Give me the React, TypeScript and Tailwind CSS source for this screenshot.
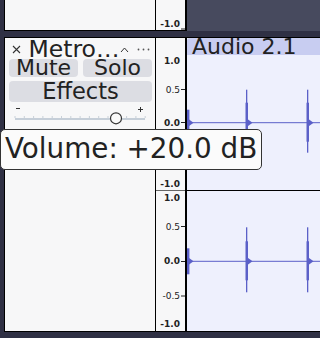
import React from 'react';

const ink = '#222';
const wave = '#5b60c8';

function RulerScale({ height, labels, ticks }: { height: number; labels: { y: number; t: string; bold?: boolean }[]; ticks: number[] }) {
  return (
    <svg width={29} height={height} className="block">
      {labels.map((l) => (
        <text
          key={l.t + l.y}
          x={24}
          y={l.y}
          textAnchor="end"
          fontFamily="DejaVu Sans, sans-serif"
          fontSize={9}
          fontWeight={l.bold ? 700 : 400}
          fill={ink}
        >
          {l.t}
        </text>
      ))}
      {ticks.map((y) => (
        <line key={y} x1={25} x2={29} y1={y} y2={y} stroke={ink} strokeWidth={1} />
      ))}
    </svg>
  );
}

function Spike({ x, cy, up, down }: { x: number; cy: number; up: number; down: number }) {
  return (
    <g fill={wave}>
      <rect x={x} y={cy - up} width={1.3} height={up + down} />
      <rect x={x - 0.5} y={cy - 20} width={2.5} height={39} />
      <polygon points={`${x + 1},${cy - 4} ${x + 6.5},${cy} ${x + 1},${cy + 4}`} />
    </g>
  );
}

function Channel({ height, cy, up, down }: { height: number; cy: number; up: number; down: number }) {
  return (
    <svg width={133} height={height} className="block">
      <line x1={0} x2={133} y1={cy} y2={cy} stroke={wave} strokeWidth={1} />
      <g fill={wave}>
        <rect x={0} y={cy - 13} width={2.4} height={26} />
        <polygon points={`1,${cy - 4} 6.5,${cy} 1,${cy + 4}`} />
      </g>
      <Spike x={59} cy={cy} up={up} down={down} />
      <Spike x={120} cy={cy} up={up} down={down} />
    </svg>
  );
}

function VolumeSlider() {
  const ticks = Array.from({ length: 15 }, (_, i) => 6 + i * 9.3);
  return (
    <svg width={142} height={24} className="block">
      <line x1={7} x2={11} y1={6.5} y2={6.5} stroke="#333" strokeWidth={1} />
      <line x1={129} x2={134} y1={7.5} y2={7.5} stroke="#333" strokeWidth={1} />
      <line x1={131.5} x2={131.5} y1={5} y2={10} stroke="#333" strokeWidth={1} />
      {ticks.map((x) => (
        <line key={x} x1={x} x2={x} y1={14} y2={16} stroke="#c8d0d8" strokeWidth={1} />
      ))}
      <line x1={6} x2={136} y1={17} y2={17} stroke="#c5ced8" strokeWidth={2} />
      <circle cx={107} cy={16.3} r={5.5} fill="#fafafa" stroke="#333" strokeWidth={1.2} />
    </svg>
  );
}

export default function App() {
  return (
    <div className="relative flex h-[338px] w-[320px] flex-col overflow-hidden bg-[#2f3044] font-['DejaVu_Sans',sans-serif] text-[#222]">
      {/* previous track, scrolled out */}
      <div className="flex h-[31px]">
        <div className="w-[4px]" />
        <div className="w-[152px] border-x border-b border-black bg-[#f7f7f8]" />
        <div className="w-[29px] border-b border-black bg-[#f7f7f8]">
          <RulerScale height={30} labels={[{ y: 26.7, t: '-1.0', bold: true }]} ticks={[29]} />
        </div>
        <div className="w-[2px] bg-black" />
        <div className="flex-1 bg-[#474a5e]" />
      </div>

      <div className="h-[6px]" />

      {/* Metronome track */}
      <div className="flex h-[295px]">
        <div className="w-[4px]" />
        <div className="flex w-[152px] flex-col border border-black bg-[#f7f7f8]">
          <div className="flex h-[20px] items-start pl-[7px]">
            <svg width={9} height={9} className="mt-[7px] block">
              <path d="M1 1 L8 8 M8 1 L1 8" stroke="#333" strokeWidth={1.1} />
            </svg>
            <span className="ml-[7.5px] text-[23.5px] leading-[22px]">Metro…</span>
            <svg width={9} height={6} className="mt-[9px] ml-[1px] block">
              <path d="M1 5 L4.5 1 L8 5" fill="none" stroke="#333" strokeWidth={1} />
            </svg>
            <svg width={13} height={3} className="mt-[10px] ml-[8px] block">
              <circle cx={1.5} cy={1.5} r={0.9} fill="#555" />
              <circle cx={6.5} cy={1.5} r={0.9} fill="#555" />
              <circle cx={11.5} cy={1.5} r={0.9} fill="#555" />
            </svg>
          </div>
          <div className="mt-[1px] grid grid-cols-2 gap-[5px] pl-[4px] pr-[3px]">
            <div className="flex h-[18px] items-center justify-center rounded-[4px] bg-[#dcdde3] text-[22px] leading-none">Mute</div>
            <div className="flex h-[18px] items-center justify-center rounded-[4px] bg-[#dcdde3] text-[22px] leading-none">Solo</div>
          </div>
          <div className="mt-[4px] pl-[4px] pr-[3px]">
            <div className="flex h-[21px] items-center justify-center rounded-[4px] bg-[#dcdde3] text-[22.5px] leading-none">Effects</div>
          </div>
          <div className="pl-[4px]">
            <VolumeSlider />
          </div>
        </div>

        <div className="flex w-[29px] flex-col border-y border-black bg-[#f7f7f8]">
          <RulerScale
            height={152}
            labels={[
              { y: 26, t: '1.0', bold: true },
              { y: 54.7, t: '0.5' },
              { y: 87.7, t: '0.0', bold: true },
              { y: 119.5, t: '-0.5' },
              { y: 148.5, t: '-1.0', bold: true },
            ]}
            ticks={[51.5, 84.5, 118]}
          />
          <div className="h-[1px] bg-[#666]" />
          <RulerScale
            height={140}
            labels={[
              { y: 9.7, t: '1.0', bold: true },
              { y: 39, t: '0.5' },
              { y: 73.3, t: '0.0', bold: true },
              { y: 108, t: '-0.5' },
              { y: 135.7, t: '-1.0', bold: true },
            ]}
            ticks={[35.5, 70.5, 105]}
          />
        </div>
        <div className="w-[2px] bg-black" />

        <div className="flex flex-1 flex-col border-y border-black bg-[#eef0fd]">
          <div className="h-[17px] overflow-hidden rounded-tl-[3px] bg-[#c8cdf1] pl-[5px] text-[22px] leading-[17px]">Audio 2.1</div>
          <Channel height={135} cy={67.7} up={33} down={30} />
          <div className="h-[1px] bg-black" />
          <Channel height={140} cy={70.3} up={34} down={31} />
        </div>
      </div>

      <div className="absolute left-0 top-[129px] flex h-[41px] w-[262px] items-center rounded-[5px] border border-[#333] bg-[#fbfbfb] pl-[4px]">
        <span className="-mt-[1px] text-[27.8px] leading-none">Volume: +20.0 dB</span>
      </div>
    </div>
  );
}
